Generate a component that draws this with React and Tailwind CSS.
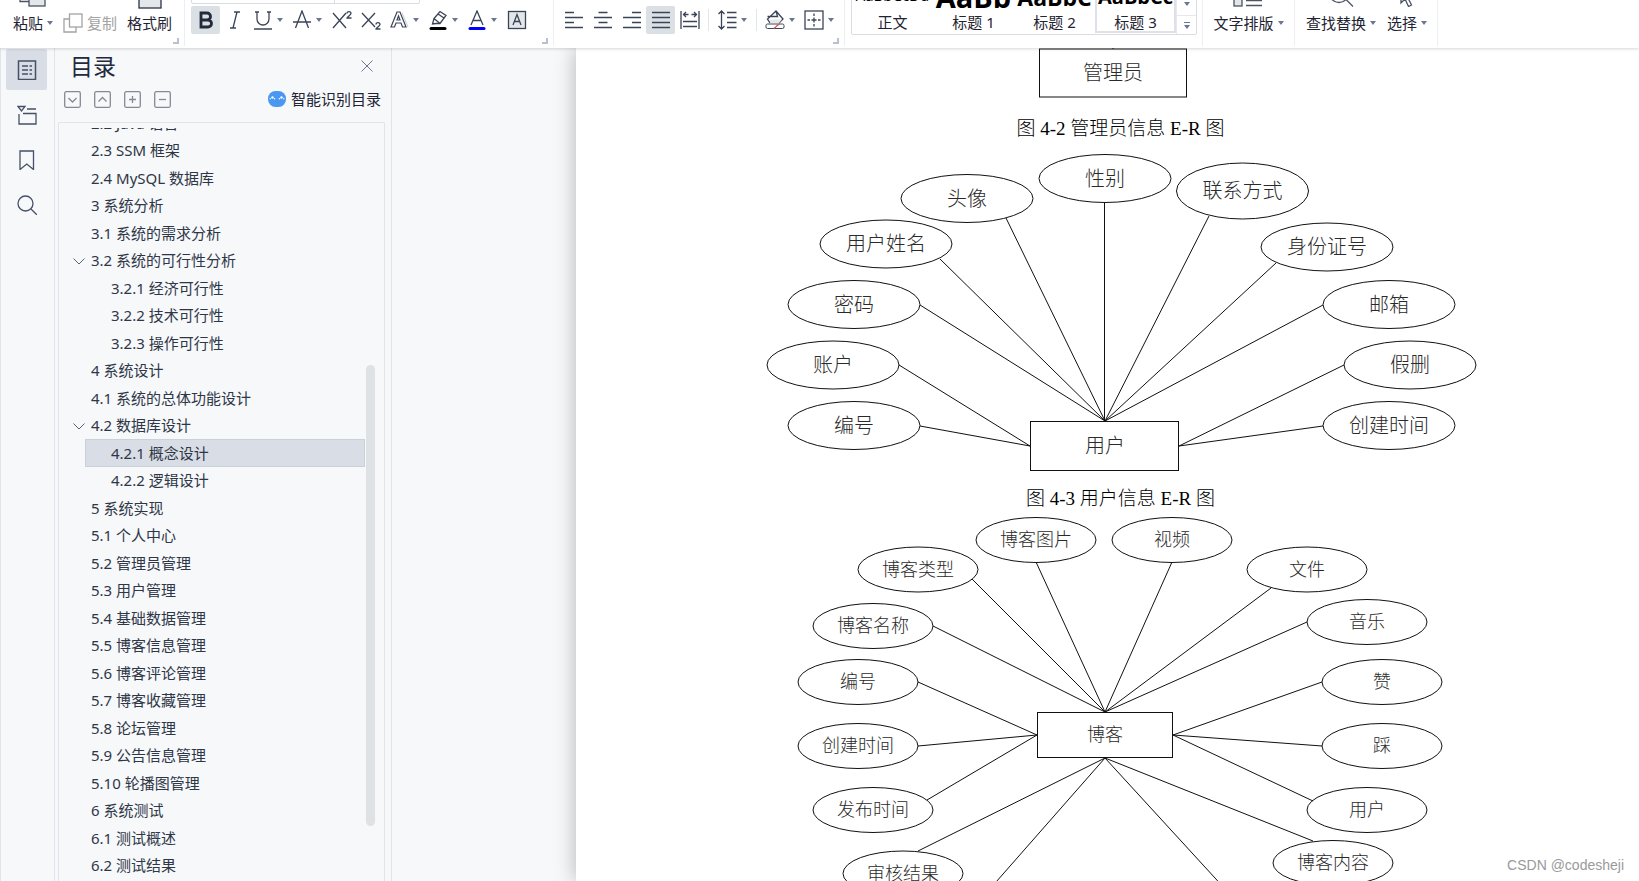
import React, { useState } from "react";
import clsx from "clsx";

const OUTLINE = [
  { id: "2.2", title: "2.2 Java 语言", level: 1 },
  { id: "2.3", title: "2.3 SSM 框架", level: 1 },
  { id: "2.4", title: "2.4 MySQL 数据库", level: 1 },
  { id: "3", title: "3 系统分析", level: 1 },
  { id: "3.1", title: "3.1 系统的需求分析", level: 1 },
  { id: "3.2", title: "3.2 系统的可行性分析", level: 1, open: true },
  { id: "3.2.1", title: "3.2.1 经济可行性", level: 2 },
  { id: "3.2.2", title: "3.2.2 技术可行性", level: 2 },
  { id: "3.2.3", title: "3.2.3 操作可行性", level: 2 },
  { id: "4", title: "4 系统设计", level: 1 },
  { id: "4.1", title: "4.1 系统的总体功能设计", level: 1 },
  { id: "4.2", title: "4.2 数据库设计", level: 1, open: true },
  { id: "4.2.1", title: "4.2.1 概念设计", level: 2 },
  { id: "4.2.2", title: "4.2.2 逻辑设计", level: 2 },
  { id: "5", title: "5 系统实现", level: 1 },
  { id: "5.1", title: "5.1 个人中心", level: 1 },
  { id: "5.2", title: "5.2 管理员管理", level: 1 },
  { id: "5.3", title: "5.3 用户管理", level: 1 },
  { id: "5.4", title: "5.4 基础数据管理", level: 1 },
  { id: "5.5", title: "5.5 博客信息管理", level: 1 },
  { id: "5.6", title: "5.6 博客评论管理", level: 1 },
  { id: "5.7", title: "5.7 博客收藏管理", level: 1 },
  { id: "5.8", title: "5.8 论坛管理", level: 1 },
  { id: "5.9", title: "5.9 公告信息管理", level: 1 },
  { id: "5.10", title: "5.10 轮播图管理", level: 1 },
  { id: "6", title: "6 系统测试", level: 1 },
  { id: "6.1", title: "6.1 测试概述", level: 1 },
  { id: "6.2", title: "6.2 测试结果", level: 1 },
];

// from = where the connector leaves the ellipse, to = anchor on the entity box
const ADMIN = {
  height: 62,
  size: 20,
  box: { x: 279.5, y: 1, w: 147, h: 48, label: "管理员" },
  nodes: [],
  lines: [[353, -8, 353, 1]],
};

const USER = {
  height: 334,
  size: 20,
  rx: 66,
  ry: 24,
  box: { x: 270.5, y: 275.5, w: 148, h: 49, label: "用户" },
  nodes: [
    { label: "性别", cx: 345, cy: 32.5, from: [344.5, 57], to: [344.5, 275] },
    { label: "头像", cx: 207, cy: 52.5, from: [246, 72], to: [345, 275] },
    { label: "用户姓名", cx: 126, cy: 98, from: [180, 113], to: [345, 275] },
    { label: "密码", cx: 94, cy: 158.5, from: [160, 159], to: [345, 275] },
    { label: "账户", cx: 73, cy: 219, from: [139, 219], to: [270, 300] },
    { label: "编号", cx: 94, cy: 279.5, from: [160, 280], to: [270, 300] },
    { label: "联系方式", cx: 482.5, cy: 45, ry: 28, from: [449, 70], to: [345, 275] },
    { label: "身份证号", cx: 567, cy: 101, from: [516, 117], to: [345, 275] },
    { label: "邮箱", cx: 629, cy: 158.5, from: [563, 159], to: [345, 275] },
    { label: "假删", cx: 650, cy: 219, from: [584, 219], to: [419, 300] },
    { label: "创建时间", cx: 629, cy: 279.5, from: [563, 280], to: [419, 300] },
  ],
  lines: [],
};

const BLOG = {
  height: 374,
  size: 18,
  rx: 60,
  ry: 22.5,
  box: { x: 277.5, y: 196.5, w: 135, h: 45, label: "博客" },
  nodes: [
    { label: "博客图片", cx: 276, cy: 24, from: [276, 46], to: [345, 196] },
    { label: "博客类型", cx: 158, cy: 53.5, from: [212, 63], to: [345, 196] },
    { label: "博客名称", cx: 113, cy: 110, from: [173, 110], to: [345, 196] },
    { label: "编号", cx: 98, cy: 166, from: [158, 166], to: [277, 219] },
    { label: "创建时间", cx: 98, cy: 230, from: [158, 230], to: [277, 219] },
    { label: "发布时间", cx: 113, cy: 294, from: [167, 284], to: [277, 219] },
    { label: "审核结果", cx: 143, cy: 357.5, from: [158, 335], to: [345, 242] },
    { label: "视频", cx: 412, cy: 24, from: [412, 46], to: [345, 196] },
    { label: "文件", cx: 547, cy: 53.5, from: [511, 72], to: [345, 196] },
    { label: "音乐", cx: 607, cy: 106, from: [547, 106], to: [345, 196] },
    { label: "赞", cx: 622, cy: 166, from: [562, 166], to: [413, 219] },
    { label: "踩", cx: 622, cy: 230, from: [562, 230], to: [413, 219] },
    { label: "用户", cx: 607, cy: 294, from: [553, 285], to: [413, 219] },
    { label: "博客内容", cx: 573, cy: 347, from: [553, 325], to: [345, 242] },
  ],
  lines: [
    [345, 242, 229, 374],
    [345, 242, 466, 374],
  ],
};

function ErDiagram({ data }) {
  const { height, size, rx, ry, box, nodes, lines } = data;
  const text = (label, x, y) => (
    <text
      key={label}
      x={x}
      y={y + Math.round(size * 0.36)}
      fontSize={size}
      textAnchor="middle"
      className="fill-[#2a2a2a] stroke-none font-light"
    >
      {label}
    </text>
  );

  return (
    <svg
      width="722"
      height={height}
      viewBox={`0 0 722 ${height}`}
      fill="none"
      className="shrink-0 stroke-[#111111] font-['Liberation_Serif','Noto_Sans_CJK_SC',serif]"
    >
      {nodes.map((n) => (
        <g key={n.label}>
          <line x1={n.from[0]} y1={n.from[1]} x2={n.to[0]} y2={n.to[1]} />
          <ellipse cx={n.cx} cy={n.cy} rx={rx} ry={n.ry || ry} />
          {text(n.label, n.cx, n.cy)}
        </g>
      ))}
      {lines.map(([x1, y1, x2, y2]) => (
        <line key={x2} x1={x1} y1={y1} x2={x2} y2={y2} />
      ))}
      <rect x={box.x} y={box.y} width={box.w} height={box.h} />
      {text(box.label, Math.round(box.x + box.w / 2), box.y + box.h / 2)}
    </svg>
  );
}

function Caption({ children }) {
  return (
    <p className="flex h-9 shrink-0 items-center text-[19px] leading-none font-light text-black font-['Liberation_Serif','Noto_Sans_CJK_SC',serif]">
      {children}
    </p>
  );
}

function Caret() {
  return (
    <svg width="6" height="4" viewBox="0 0 6 4" className="shrink-0 fill-[#6b7792]">
      <path d="M0 0h6L3 4z" />
    </svg>
  );
}

function Icon({ children, size = 20 }) {
  return (
    <svg
      width={size}
      height={size}
      viewBox="0 0 20 20"
      fill="none"
      stroke="currentColor"
      strokeWidth="1.3"
      className="shrink-0"
    >
      {children}
    </svg>
  );
}

function Tool({ label, active, menu, children }) {
  return (
    <button
      type="button"
      aria-label={label}
      className={clsx(
        "flex h-7 shrink-0 items-center rounded-xs text-[#3b4457]",
        menu ? "w-[39px] gap-1 pl-1" : "w-[29px] justify-center",
        active && "bg-[#dbe0e5]"
      )}
    >
      {children}
      {menu && <Caret />}
    </button>
  );
}

function TextTool({ label, menu, icon }) {
  return (
    <button
      type="button"
      className="flex shrink-0 flex-col items-center text-[15px] leading-5 whitespace-nowrap text-[#1f2433]"
    >
      {icon}
      <span className="flex items-center gap-1">
        {label}
        {menu && <Caret />}
      </span>
    </button>
  );
}

function Group({ className, corner, children }) {
  return (
    <div className={clsx("relative flex h-[46px] shrink-0 border-r border-[#eceef1]", className)}>
      {children}
      {corner && (
        <span className="absolute right-[5px] bottom-[2px] size-[6px] border-r-2 border-b-2 border-[#b9c1d0]" />
      )}
    </div>
  );
}

const STYLES = [
  { name: "正文", sample: "AaBbCcDd", cls: "text-[15px] leading-5 pb-[9px]" },
  { name: "标题 1", sample: "AaBb", cls: "text-[29px] leading-8 font-bold pb-[1px]" },
  { name: "标题 2", sample: "AaBbC", cls: "text-[23px] leading-8 font-bold pb-[1px]" },
  { name: "标题 3", sample: "AaBbCc", cls: "text-[20px] leading-7 font-bold pb-[3px]" },
];

function Ribbon() {
  return (
    <header className="relative z-10 flex h-12 shrink-0 overflow-hidden bg-white shadow-[0_1px_3px_rgba(0,0,0,0.16)]">
      <Group className="w-[185px] items-end gap-[10px] pb-[13px] pl-[13px]" corner>
        <TextTool
          label="粘贴"
          menu
          icon={
            <svg width="28" height="24" viewBox="0 0 28 24" fill="none" className="mb-[6px] shrink-0 stroke-[#4b5365]" strokeWidth="1.3">
              <path d="M10 18.500H1V2h18v8" />
              <rect x="10" y="10" width="16" height="13" fill="#e4e7ea" />
            </svg>
          }
        />
        <div className="flex items-center gap-1 text-[15px] leading-5 whitespace-nowrap text-[#a3a3a3]">
          <Icon>
            <path d="M6 6H1v13h12v-5" />
            <rect x="6.500" y="1" width="12.500" height="13" />
          </Icon>
          <button type="button">复制</button>
        </div>
        <TextTool
          label="格式刷"
          icon={
            <svg width="24" height="24" viewBox="0 0 24 24" fill="#e4e7ea" className="mb-1 shrink-0 stroke-[#2b3245]" strokeWidth="1.3">
              <rect x="1" y="2" width="22" height="21" />
            </svg>
          }
        />
      </Group>

      <Group className="w-[369px] flex-col justify-end pb-[12px] pl-[6px]" corner>
        <div className="mb-[2px] flex h-3 w-[229px] shrink-0 rounded-b-xs border border-[#d9dce0]">
          <span className="w-[143px] border-r border-[#d9dce0]" />
        </div>
        <div className="flex items-center">
          <Tool label="加粗" active>
            <Icon>
              <path d="M5 3h6a3.500 3.500 0 0 1 0 7H5zM5 10h7a3.500 3.500 0 0 1 0 7H5z" strokeWidth="2.800" stroke="#232a3c" />
            </Icon>
          </Tool>
          <Tool label="倾斜">
            <Icon>
              <path d="M9 2h6M5 18h6M12 2 8 18" />
            </Icon>
          </Tool>
          <Tool label="下划线" menu>
            <Icon>
              <path d="M2 2h4M14 2h4M4 2v7a6 6 0 0 0 12 0V2M1 19h18" />
            </Icon>
          </Tool>
          <Tool label="删除线" menu>
            <Icon>
              <path d="M3.500 18 10 1l6.500 17M1 12h18" />
            </Icon>
          </Tool>
          <Tool label="上标">
            <Icon>
              <path d="M1 3l13 15M14 3 1 18" />
              <path d="M15 3.500C15 1 19 1 19 3.500 19 5 15 7 15 8h4.500" />
            </Icon>
          </Tool>
          <Tool label="下标">
            <Icon>
              <path d="M1 3l13 14M14 3 1 17" />
              <path d="M15 14.500c0-2.500 4-2.500 4 0 0 1.500-4 3.500-4 4.500h4.500" />
            </Icon>
          </Tool>
          <Tool label="文字效果" menu>
            <Icon>
              <path d="M2 17 8 2h3l6 15h-3.500L12 13H7l-1.500 4zM8 10h3L9.500 6z" strokeWidth="1.200" />
              <path d="M13 3l6 14" stroke="#d4d8de" />
            </Icon>
          </Tool>
          <Tool label="突出显示" menu>
            <Icon>
              <path d="M6 8.500 12 1.500l6 4-6 8H8L4.500 14zM6 8.500l6 5M10 4l6 4" />
              <path d="M3 18.500h14" stroke="#000" strokeWidth="3" strokeLinecap="round" />
            </Icon>
          </Tool>
          <Tool label="字体颜色" menu>
            <Icon>
              <path d="M4 15 10 1l6 14M6 10.500h8" />
              <path d="M3 18.500h14" stroke="#0000ff" strokeWidth="3" strokeLinecap="round" />
            </Icon>
          </Tool>
          <Tool label="字符底纹">
            <Icon>
              <rect x="1.500" y="1.500" width="17" height="17" fill="#e4e7ea" />
              <path d="M6 15 10 4.500 14 15M7.500 11.500h5" />
            </Icon>
          </Tool>
        </div>
      </Group>

      <Group className="w-[291px] items-end pb-[12px] pl-[5px]" corner>
        <Tool label="左对齐">
          <Icon>
            <path d="M1 2.500h9M1 7.500h18M1 12.500h9M1 17.500h18" strokeWidth="1.600" />
          </Icon>
        </Tool>
        <Tool label="居中">
          <Icon>
            <path d="M5.500 2.500h9M1 7.500h18M5.500 12.500h9M1 17.500h18" strokeWidth="1.600" />
          </Icon>
        </Tool>
        <Tool label="右对齐">
          <Icon>
            <path d="M10 2.500h9M1 7.500h18M10 12.500h9M1 17.500h18" strokeWidth="1.600" />
          </Icon>
        </Tool>
        <Tool label="两端对齐" active>
          <Icon>
            <path d="M1 2.500h18M1 7.500h18M1 12.500h18M1 17.500h18" strokeWidth="1.600" />
          </Icon>
        </Tool>
        <Tool label="分散对齐">
          <Icon>
            <path d="M1 1v18M19 1v18M3 4.500h5.500M11.500 4.500H17M6 2 3.500 4.500 6 7M14 2l2.500 2.500L14 7M3 11.500h14M3 16.500h14" />
          </Icon>
        </Tool>
        <span className="mr-1 mb-[3px] ml-1 h-[22px] w-px shrink-0 bg-[#e2e5e9]" />
        <Tool label="行距" menu>
          <Icon>
            <path d="M4.500 1v18M1.500 4 4.500 1l3 3M1.500 16l3 3 3-3M10 2.500h9.500M10 7.500h9.500M10 12.500h9.500M10 17.500h9.500" />
          </Icon>
        </Tool>
        <span className="mr-1 mb-[3px] ml-1 h-[22px] w-px shrink-0 bg-[#e2e5e9]" />
        <Tool label="底纹颜色" menu>
          <Icon>
            <path d="M5 13 2.500 9 11 1l7 8-4 4M2.500 6.500h10L11 1" />
            <path d="M4 9.500h13L14 13H6z" fill="#e4e7ea" stroke="none" />
            <rect x="1" y="14" width="18" height="4.500" rx="1.500" strokeWidth="1" />
            <path d="M9 18.500l5-4.500" stroke="#e05252" />
          </Icon>
        </Tool>
        <Tool label="边框" menu>
          <Icon>
            <rect x="1" y="1" width="18" height="18" />
            <path d="M10 3.500V6M10 14v2.500M3.500 10H6M14 10h2.500M10 7.500v5M7.500 10h5" />
          </Icon>
        </Tool>
      </Group>

      <Group className="w-[358px] items-end pb-[11px] pl-[6px]">
        <div className="flex h-[60px] w-[346px] shrink-0 rounded-b-xs border border-[#d9dce0]">
          {STYLES.map((s) => (
            <button
              key={s.name}
              type="button"
              className={clsx(
                "mb-[1px] flex w-[81px] shrink-0 flex-col items-center justify-end overflow-hidden border-2 text-black",
                s.name === "标题 3" ? "border-[#dfe1e7]" : "border-transparent"
              )}
            >
              <span className={clsx("shrink-0 font-['Open_Sans',sans-serif]", s.cls)}>{s.sample}</span>
              <span className="shrink-0 pb-[1px] text-[15px] leading-4 text-[#1f2433]">{s.name}</span>
            </button>
          ))}
          <div className="flex flex-1 flex-col border-l border-[#e6e8ec]">
            <button type="button" aria-label="向下" className="flex flex-1 items-end justify-center border-b border-[#e6e8ec] pb-[9px]">
              <Caret />
            </button>
            <button type="button" aria-label="更多样式" className="flex h-[18px] flex-col items-center justify-center gap-[2px]">
              <span className="h-px w-[6px] bg-[#6b7792]" />
              <Caret />
            </button>
          </div>
        </div>
      </Group>

      <Group className="w-[92px] items-end justify-center pb-[13px]">
        <TextTool
          label="文字排版"
          menu
          icon={
            <svg width="30" height="20" viewBox="0 0 30 20" fill="none" className="mb-[6px] shrink-0 stroke-[#4b5365]" strokeWidth="1.300">
              <rect x="1" y="11" width="8" height="8" fill="#e4e7ea" />
              <path d="M13 13.500h16M13 18.500h16" />
            </svg>
          }
        />
      </Group>

      <Group className="w-[143px] items-end gap-[11px] pb-[13px] pl-[11px]">
        <TextTool
          label="查找替换"
          menu
          icon={
            <svg width="26" height="26" viewBox="0 0 26 26" fill="none" className="mb-[6px] shrink-0 stroke-[#4b5365]" strokeWidth="1.300">
              <circle cx="11" cy="12" r="9.500" />
              <path d="M18 18.500l7 7" />
            </svg>
          }
        />
        <TextTool
          label="选择"
          menu
          icon={
            <svg width="16" height="22" viewBox="0 0 16 22" fill="none" className="mb-[6px] shrink-0 stroke-[#4b5365]" strokeWidth="1.300">
              <path d="M2 1v17l4-4 3.500 7.500 3-1.500L9 13h5.500z" />
            </svg>
          }
        />
      </Group>
    </header>
  );
}

function Rail() {
  const btn = "flex size-[41px] items-center justify-center rounded-xs text-[#46506a]";
  return (
    <nav className="flex w-[55px] shrink-0 flex-col gap-1 border-x border-[#e1e4ea] pt-[1px] pl-[5px]">
      <button type="button" aria-label="目录" className={clsx(btn, "bg-[#d9dee6]")}>
        <Icon>
          <rect x="1.500" y="1" width="17" height="18.500" strokeWidth="1.500" />
          <path d="M5 6h6M5 10h6M5 14h6M12.500 6H15M12.500 10H15M12.500 14H15" />
        </Icon>
      </button>
      <button type="button" aria-label="章节" className={btn}>
        <Icon>
          <path d="M1 1.500h7L4.500 6zM10 4h9M2 9v10h17V8.500H6" />
        </Icon>
      </button>
      <button type="button" aria-label="书签" className={btn}>
        <Icon>
          <path d="M3 1h13.500v18.500L9.750 14 3 19.500z" />
        </Icon>
      </button>
      <button type="button" aria-label="查找" className={btn}>
        <Icon>
          <circle cx="8.500" cy="8.500" r="7.500" />
          <path d="M14 14l6 6" />
        </Icon>
      </button>
    </nav>
  );
}

function BoxButton({ label, d }) {
  return (
    <button type="button" aria-label={label} className="text-[#858993]">
      <svg width="17" height="17" viewBox="0 0 17 17" fill="none" stroke="currentColor" strokeWidth="1.3">
        <rect x="0.700" y="0.700" width="15.600" height="15.600" rx="1.500" />
        <path d={d} />
      </svg>
    </button>
  );
}

function OutlinePanel() {
  const [selected, setSelected] = useState("4.2.1");

  return (
    <aside className="flex w-[337px] shrink-0 flex-col border-r border-[#e1e4ea] pr-[6px] pl-[3px] text-[#2f3747]">
      <div className="flex h-9 shrink-0 items-center justify-between px-3">
        <h2 className="text-[23px] leading-none text-[#232a3c]">目录</h2>
        <button type="button" aria-label="关闭" className="text-[#6b7792]">
          <svg width="12" height="12" viewBox="0 0 12 12" stroke="currentColor">
            <path d="M0.500 0.500l11 11M11.500 0.500l-11 11" />
          </svg>
        </button>
      </div>

      <div className="flex h-[30px] shrink-0 items-center gap-[13px] pr-1 pl-[6px]">
        <BoxButton label="全部展开" d="M4.500 7l4 4 4-4" />
        <BoxButton label="全部收起" d="M4.500 10.500l4-4 4 4" />
        <BoxButton label="展开一级" d="M8.500 5v7M5 8.500h7" />
        <BoxButton label="收起一级" d="M5 8.500h7" />
        <button type="button" className="ml-auto flex items-center gap-[5px] text-[15px] leading-none text-[#1f2433]">
          <svg width="18" height="16" viewBox="0 0 18 16">
            <rect width="18" height="16" rx="7.500" fill="#4a97f2" />
            <g fill="#fff">
              <circle cx="4.500" cy="6.500" r="1.200" />
              <circle cx="13.500" cy="6.500" r="1.200" />
              <circle cx="2.200" cy="7.800" r="0.700" />
              <circle cx="6.600" cy="7.800" r="0.700" />
              <circle cx="11.400" cy="7.800" r="0.700" />
              <circle cx="15.800" cy="7.800" r="0.700" />
            </g>
          </svg>
          智能识别目录
        </button>
      </div>

      <div className="mt-2 flex min-h-0 flex-1 rounded-t-xs border border-b-0 border-[#e1e4ea] pt-[5px] pr-[9px]">
        <ul className="flex min-w-0 flex-1 flex-col justify-end overflow-hidden pb-[2px]">
          {OUTLINE.map((item) => (
            <li key={item.id} className="flex shrink-0 items-center pl-[14px] odd:h-[28px] even:h-[27px]">
              {item.open ? (
                <svg width="12" height="12" viewBox="0 0 12 12" fill="none" className="shrink-0 stroke-[#5a6275]">
                  <path d="M0.500 3.500 6 9l5.500-5.500" />
                </svg>
              ) : (
                <span className="w-3 shrink-0" />
              )}
              <button
                type="button"
                onClick={() => setSelected(item.id)}
                className={clsx(
                  "flex h-full flex-1 items-center border text-left text-[15px] leading-none whitespace-nowrap",
                  item.level === 2 ? "pl-[25px]" : "pl-[5px]",
                  selected === item.id ? "border-[#c9d2da] bg-[#d9dde5]" : "border-transparent"
                )}
              >
                {item.title}
              </button>
            </li>
          ))}
        </ul>
        <div className="w-[10px] shrink-0 pt-[237px] pb-[55px]">
          <div className="ml-[1px] h-full rounded-full bg-[#dfe2e5]" />
        </div>
      </div>
    </aside>
  );
}

export default function App() {
  return (
    <div className="flex h-screen flex-col overflow-hidden bg-[#f6f8fa] font-['Noto_Sans','Noto_Sans_CJK_SC',sans-serif]">
      <Ribbon />
      <div className="flex min-h-0 flex-1">
        <Rail />
        <OutlinePanel />
        <main className="flex min-w-0 flex-1 overflow-hidden pl-[184px]">
          <article className="flex min-w-0 flex-1 flex-col items-center bg-white pl-[26px] shadow-[0_0_20px_rgba(0,0,0,0.28)]">
            <ErDiagram data={ADMIN} />
            <Caption>图 4-2 管理员信息 E-R 图</Caption>
            <ErDiagram data={USER} />
            <Caption>图 4-3 用户信息 E-R 图</Caption>
            <ErDiagram data={BLOG} />
          </article>
        </main>
      </div>
      <p className="absolute right-[15px] bottom-[6px] text-[14px] leading-5 text-[#9a9a9a] font-['Liberation_Sans',sans-serif]">
        CSDN @codesheji
      </p>
    </div>
  );
}
